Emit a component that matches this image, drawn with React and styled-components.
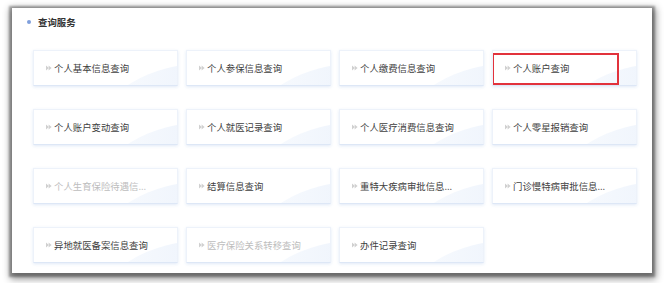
import React from "react";
import styled, { createGlobalStyle } from "styled-components";

const Global = createGlobalStyle`
  html, body { margin: 0; padding: 0; background: #ffffff; }
  body { font-family: "Noto Sans CJK SC", "Noto Sans", sans-serif; }
`;

const Page = styled.div`
  padding: 8px 12px 10px 12px;
  width: 664px;
  height: 283px;
  box-sizing: border-box;
`;

const Panel = styled.section`
  width: 640px;
  height: 265px;
  background: #ffffff;
  box-shadow: 0 1px 2px 3px rgba(0, 0, 0, 0.3), 1px 3px 7px 3px rgba(0, 0, 0, 0.42);
  box-sizing: border-box;
  padding: 0 15px;
  display: flex;
  flex-direction: column;
`;

const Header = styled.div`
  display: flex;
  align-items: center;
  gap: 7px;
  height: 28px;
  margin-bottom: 14px;
`;

const Dot = styled.span`
  width: 4px;
  height: 4px;
  border-radius: 50%;
  background: #7f9fdc;
`;

const Title = styled.span`
  font-size: 9.4px;
  font-weight: 700;
  color: #333;
`;

const Grid = styled.div`
  display: grid;
  grid-template-columns: repeat(4, 145px);
  grid-auto-rows: 36px;
  column-gap: 8px;
  row-gap: 23px;
  margin-left: 6px;
`;

const Card = styled.div`
  position: relative;
  overflow: hidden;
  background: #ffffff;
  border: 1px solid #edf2fa;
  border-bottom-color: #dde7f6;
  box-shadow: 0 1px 3px rgba(120, 160, 220, 0.22);
  box-sizing: border-box;
  display: flex;
  align-items: center;
  gap: 2px;
  padding-left: 12px;
  &::before {
    content: "";
    position: absolute;
    left: 65px;
    top: 12px;
    width: 220px;
    height: 136px;
    border-radius: 50%;
    background: linear-gradient(90deg, rgba(236, 243, 252, 0.3) 0%, #edf3fc 50%, #eaf2fc 100%);
  }
`;

const Label = styled.span`
  position: relative;
  font-size: 9.4px;
  color: ${(p) => (p.$disabled ? "#bdbdbd" : "#404040")};
  white-space: nowrap;
`;

const Arrow = styled.svg`
  position: relative;
  width: 6px;
  height: 6px;
  flex: none;
`;

const Highlight = styled.div`
  position: absolute;
  left: -1px;
  top: 2px;
  width: 127px;
  height: 32px;
  border: 2px solid #e2323c;
  box-sizing: border-box;
`;

const items = [
  { t: "个人基本信息查询" },
  { t: "个人参保信息查询" },
  { t: "个人缴费信息查询" },
  { t: "个人账户查询", hl: true },
  { t: "个人账户变动查询" },
  { t: "个人就医记录查询" },
  { t: "个人医疗消费信息查询" },
  { t: "个人零星报销查询" },
  { t: "个人生育保险待遇信...", d: true },
  { t: "结算信息查询" },
  { t: "重特大疾病审批信息..." },
  { t: "门诊慢特病审批信息..." },
  { t: "异地就医备案信息查询" },
  { t: "医疗保险关系转移查询", d: true },
  { t: "办件记录查询" },
];

const ArrowIcon = () => (
  <Arrow viewBox="0 0 6 6">
    <path d="M0 0.6 L2.8 3 L0 5.4 Z" fill="#d0d0d0" />
    <path d="M2.6 0.6 L5.6 3 L2.6 5.4 Z" fill="#d0d0d0" />
  </Arrow>
);

export default function App() {
  return (
    <Page>
      <Global />
      <Panel>
        <Header>
          <Dot />
          <Title>查询服务</Title>
        </Header>
        <Grid>
          {items.map((it) => (
            <Card key={it.t}>
              <ArrowIcon />
              <Label $disabled={it.d}>{it.t}</Label>
              {it.hl && <Highlight />}
            </Card>
          ))}
        </Grid>
      </Panel>
    </Page>
  );
}
